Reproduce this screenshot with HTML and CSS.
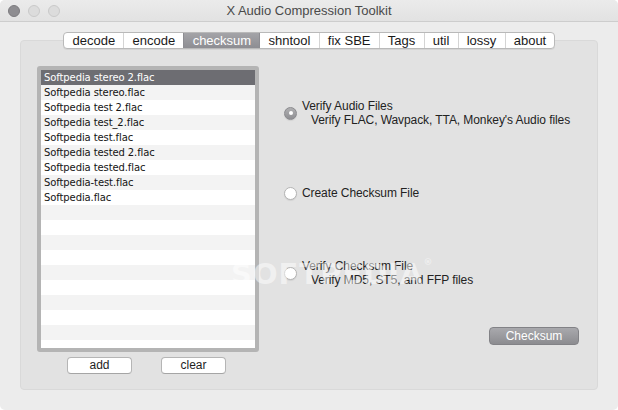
FILE: index.html
```html
<!DOCTYPE html>
<html>
<head>
<meta charset="utf-8">
<link rel="stylesheet" href="styles.css">
</head>
<body>
<div class="window">
  <div class="titlebar">
    <div class="lights">
      <span class="light dark"></span>
      <span class="light"></span>
      <span class="light"></span>
    </div>
    <div class="title">X Audio Compression Toolkit</div>
    <div></div>
  </div>
  <div class="content">
    <div class="tabs">
      <div class="tab">decode</div>
      <div class="tab">encode</div>
      <div class="tab active">checksum</div>
      <div class="tab">shntool</div>
      <div class="tab">fix SBE</div>
      <div class="tab">Tags</div>
      <div class="tab">util</div>
      <div class="tab">lossy</div>
      <div class="tab">about</div>
    </div>
    <div class="box">
      <div class="left">
        <div class="list">
          <div class="row selected">Softpedia stereo 2.flac</div>
          <div class="row">Softpedia stereo.flac</div>
          <div class="row">Softpedia test 2.flac</div>
          <div class="row">Softpedia test_2.flac</div>
          <div class="row">Softpedia test.flac</div>
          <div class="row">Softpedia tested 2.flac</div>
          <div class="row">Softpedia tested.flac</div>
          <div class="row">Softpedia-test.flac</div>
          <div class="row">Softpedia.flac</div>
        </div>
        <div class="list-buttons">
          <div class="btn">add</div>
          <div class="btn">clear</div>
        </div>
      </div>
      <div class="right">
        <div class="option first">
          <span class="radio on"></span>
          <div class="opt-text">
            <div class="opt-label">Verify Audio Files</div>
            <div class="opt-sub">Verify FLAC, Wavpack, TTA, Monkey's Audio files</div>
          </div>
        </div>
        <div class="option">
          <span class="radio"></span>
          <div class="opt-text">
            <div class="opt-label">Create Checksum File</div>
          </div>
        </div>
        <div class="option">
          <span class="radio"></span>
          <div class="opt-text">
            <div class="opt-label">Verify Checksum File</div>
            <div class="opt-sub">Verify MD5, ST5, and FFP files</div>
          </div>
        </div>
        <div class="action">Checksum</div>
      </div>
      <div class="watermark">SOFTPEDIA<sup>®</sup></div>
    </div>
  </div>
</div>
</body>
</html>
```
FILE: styles.css
```css
html, body {
  margin: 0;
  padding: 0;
  background: #ffffff;
}
body {
  width: 618px;
  height: 410px;
  overflow: hidden;
  font-family: "Liberation Sans", Arial, sans-serif;
}
.window {
  width: 618px;
  height: 410px;
  background: #ececec;
  border-radius: 5px;
  overflow: hidden;
}
.titlebar {
  height: 21px;
  border-bottom: 1px solid #cdcdcd;
  background: linear-gradient(#ebebeb, #e2e2e2);
  display: grid;
  grid-template-columns: 1fr auto 1fr;
  align-items: center;
}
.lights {
  display: flex;
  gap: 8px;
  padding-left: 8px;
}
.light {
  width: 10px;
  height: 10px;
  border-radius: 50%;
  background: #dcdcdc;
  border: 1px solid #c9c9c9;
}
.light.dark {
  background: #8e8d91;
  border-color: #7c7b7f;
}
.title {
  font-size: 13px;
  color: #4a4a4a;
}
.content {
  padding-top: 10px;
}
.tabs {
  position: relative;
  z-index: 1;
  display: flex;
  justify-content: center;
  width: max-content;
  margin: 0 auto;
  border: 1px solid #b9b9b9;
  border-radius: 4px;
  background: #ffffff;
  overflow: hidden;
  box-shadow: 0 1px 0 rgba(0,0,0,0.06);
}
.tab {
  height: 15px;
  line-height: 15px;
  padding: 0 8.2px;
  font-size: 13px;
  color: #1a1a1a;
  border-left: 1px solid #d4d4d4;
}
.tab:first-child {
  border-left: none;
  padding-left: 9px;
}
.tab.active {
  background: linear-gradient(#a4a4a8, #8d8d92);
  color: #ffffff;
  border-left-color: #8d8d92;
}
.tab.active + .tab {
  border-left-color: #8d8d92;
}
.box {
  position: relative;
  margin: -9px 20px 0;
  height: 350px;
  box-sizing: border-box;
  background: #e2e2e2;
  border: 1px solid #d9d9d9;
  border-radius: 4px;
  padding: 25px 18px 0 16px;
  display: flex;
}
.left {
  width: 222px;
  flex: none;
}
.list {
  width: 222px;
  height: 286px;
  box-sizing: border-box;
  border: 4px solid #b4b4b4;
  border-radius: 3px;
  background: repeating-linear-gradient(to bottom, #ffffff 0 15px, #f3f3f3 15px 30px);
  font-family: "DejaVu Sans", sans-serif;
  font-size: 10px;
  letter-spacing: -0.1px;
  color: #141414;
}
.row {
  height: 15px;
  line-height: 15px;
  padding-left: 3px;
  white-space: nowrap;
}
.row.selected {
  background: #6d6d72;
  color: #ffffff;
}
.list-buttons {
  display: flex;
  gap: 29px;
  padding-left: 30px;
  margin-top: 5px;
}
.btn {
  width: 65px;
  height: 17px;
  box-sizing: border-box;
  background: #ffffff;
  border: 1px solid #b5b5b5;
  border-bottom-color: #a5a5a5;
  border-radius: 4px;
  text-align: center;
  font-size: 12px;
  line-height: 15px;
  color: #1e1e1e;
}
.right {
  flex: 1;
  margin-left: 25px;
  display: flex;
  flex-direction: column;
}
.option {
  display: flex;
  align-items: center;
  gap: 5px;
  margin-top: 59px;
}
.option.first {
  margin-top: 33px;
}
.radio {
  width: 13px;
  height: 13px;
  box-sizing: border-box;
  border-radius: 50%;
  background: #ffffff;
  border: 1px solid #b4b4b4;
  box-shadow: 0 1px 1px rgba(0,0,0,0.08);
  flex: none;
  display: flex;
  align-items: center;
  justify-content: center;
}
.radio.on {
  background: linear-gradient(#b0b0b2, #8f8f93);
  border-color: #8a8a8e;
}
.radio.on::after {
  content: "";
  width: 4px;
  height: 4px;
  border-radius: 50%;
  background: #ffffff;
}
.opt-text {
  font-size: 12px;
  line-height: 14px;
  letter-spacing: -0.08px;
  color: #222222;
}
.opt-sub {
  padding-left: 9px;
}
.action {
  align-self: flex-end;
  margin-top: 40px;
  width: 90px;
  height: 18px;
  box-sizing: border-box;
  border-radius: 4px;
  border: 1px solid #828286;
  background: linear-gradient(#a9a9ad, #8c8c90);
  color: #ffffff;
  font-size: 12px;
  line-height: 16px;
  text-align: center;
}
.watermark {
  position: absolute;
  left: 210px;
  top: 216px;
  font-family: "DejaVu Sans", sans-serif;
  font-weight: bold;
  font-size: 29px;
  letter-spacing: 1px;
  color: rgba(255,255,255,0.5);
  pointer-events: none;
}
.watermark sup {
  font-size: 9px;
  vertical-align: top;
}
```
